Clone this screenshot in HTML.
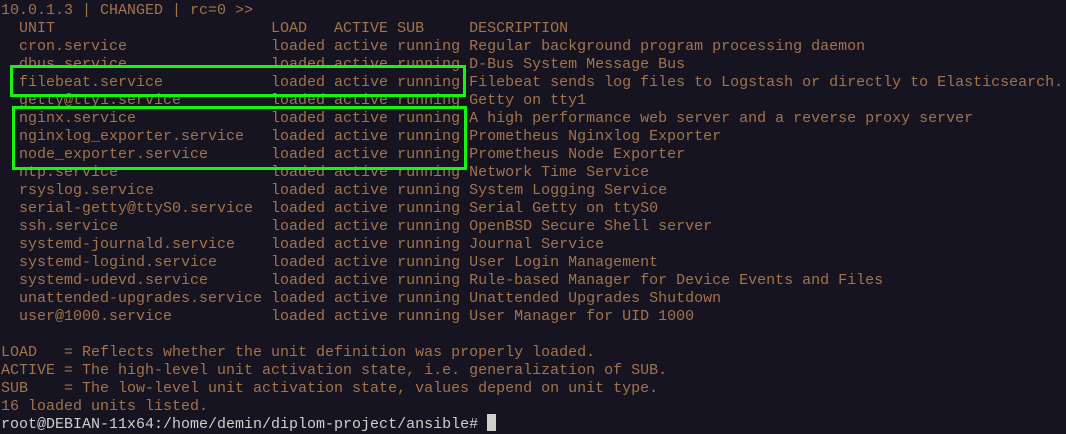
<!DOCTYPE html>
<html><head><meta charset="utf-8"><style>
html,body{margin:0;padding:0;background:#171421;width:1066px;height:434px;overflow:hidden}
pre{margin:0;position:absolute;left:1px;top:2px;font-family:"Liberation Mono",monospace;font-size:15px;line-height:18px;color:#a2734c}
.w{color:#d0cfcc}
.cur{position:absolute;left:487px;top:414px;width:9px;height:17px;background:#d0cfcc}
.box{position:absolute;border:3px solid #16f50e;box-sizing:border-box}
</style></head><body>
<pre>10.0.1.3 | CHANGED | rc=0 &gt;&gt;
  UNIT                        LOAD   ACTIVE SUB     DESCRIPTION
  cron.service                loaded active running Regular background program processing daemon
  dbus.service                loaded active running D-Bus System Message Bus
  filebeat.service            loaded active running Filebeat sends log files to Logstash or directly to Elasticsearch.
  getty@tty1.service          loaded active running Getty on tty1
  nginx.service               loaded active running A high performance web server and a reverse proxy server
  nginxlog_exporter.service   loaded active running Prometheus Nginxlog Exporter
  node_exporter.service       loaded active running Prometheus Node Exporter
  ntp.service                 loaded active running Network Time Service
  rsyslog.service             loaded active running System Logging Service
  serial-getty@ttyS0.service  loaded active running Serial Getty on ttyS0
  ssh.service                 loaded active running OpenBSD Secure Shell server
  systemd-journald.service    loaded active running Journal Service
  systemd-logind.service      loaded active running User Login Management
  systemd-udevd.service       loaded active running Rule-based Manager for Device Events and Files
  unattended-upgrades.service loaded active running Unattended Upgrades Shutdown
  user@1000.service           loaded active running User Manager for UID 1000

LOAD   = Reflects whether the unit definition was properly loaded.
ACTIVE = The high-level unit activation state, i.e. generalization of SUB.
SUB    = The low-level unit activation state, values depend on unit type.
16 loaded units listed.
<span class="w">root@DEBIAN-11x64:/home/demin/diplom-project/ansible# </span></pre>
<div class="cur"></div>
<div class="box" style="left:10px;top:65px;width:456px;height:32px"></div>
<div class="box" style="left:12px;top:106px;width:455px;height:64px"></div>
</body></html>
